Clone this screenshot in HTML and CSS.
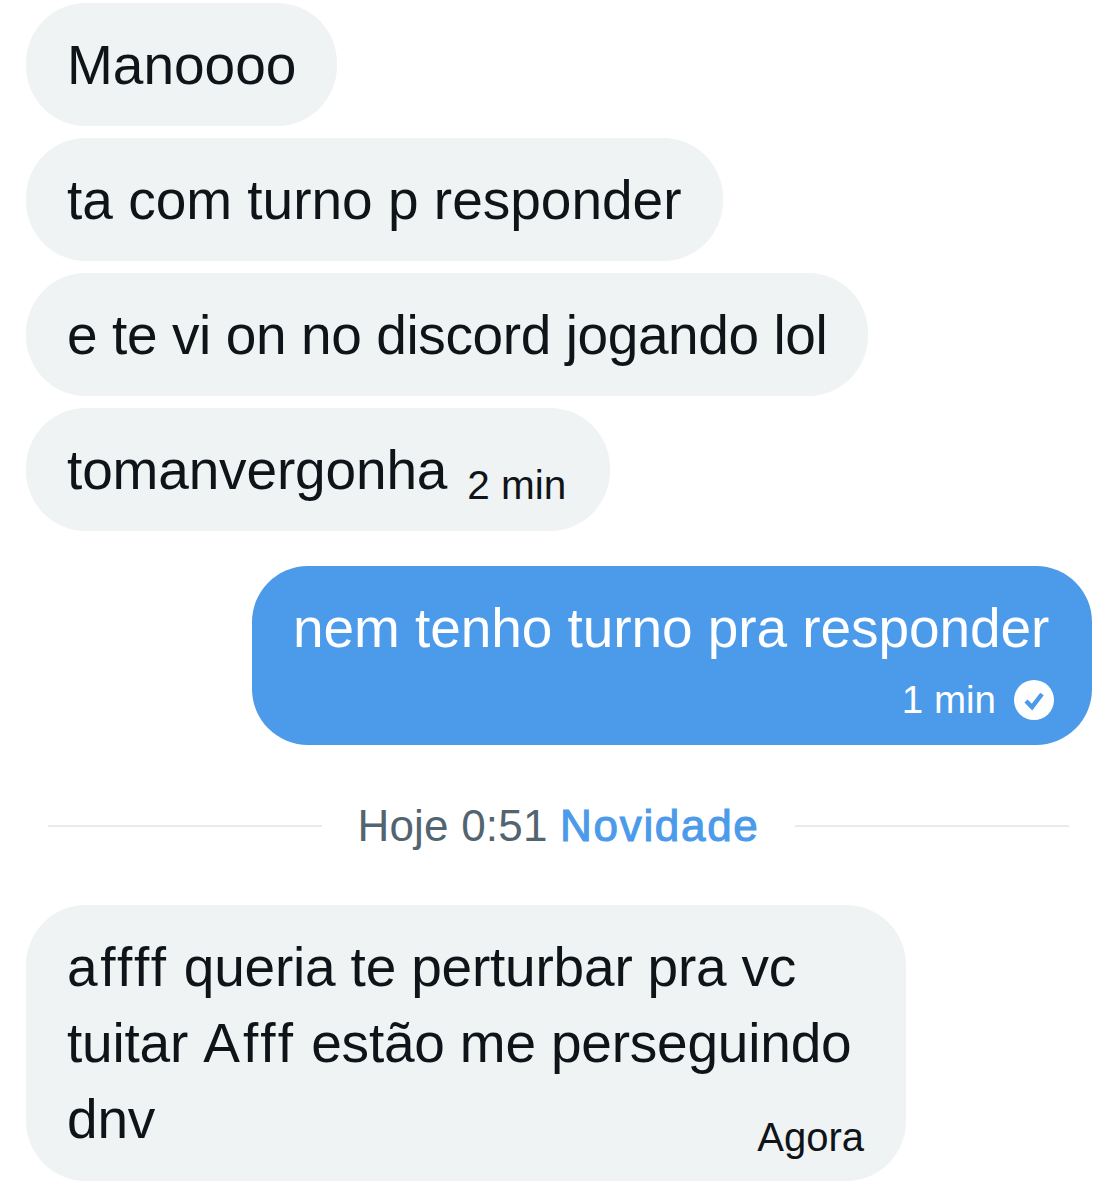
FILE: index.html
```html
<!DOCTYPE html>
<html lang="en">
<head>
  <meta charset="UTF-8" />
  <title>Messages</title>
  <link rel="stylesheet" href="styles.css">
</head>
<body>

<div class="chat">
  <div class="bubble">Manoooo</div>
  <div class="bubble">ta com turno p responder</div>
  <div class="bubble tight">e te vi on no discord jogando lol</div>
  <div class="bubble long">tomanvergonha<span class="time">2 min</span></div>

  <div class="bubble mine">
    <div>nem tenho turno pra responder</div>
    <div class="meta">
      <span>1 min</span>
      <svg width="40" height="40" viewBox="0 0 40 40">
        <circle cx="20" cy="20" r="20" fill="#fff" />
        <path d="M12 21l6 6 10-13" fill="none" stroke="#4c9aea" stroke-width="4.5" />
      </svg>
    </div>
  </div>

  <div class="divider">
    <span class="line"></span>
    <span class="label">Hoje 0:51 <b>Novidade</b></span>
    <span class="line"></span>
  </div>

  <div class="bubble last">
    <div><span class="wide-a">affff</span> queria te perturbar pra vc<br>tuitar <span class="wide-b">Afff</span> estão me perseguindo<br>dnv</div>
    <div class="now">Agora</div>
  </div>
</div>

</body>
</html>
```

FILE: styles.css
```css
body {
  margin: 0;
  background-color: #ffffff;
  font-family: "Liberation Sans", sans-serif;
  font-variant-ligatures: none;
  color: #0f1419;
}

.chat {
  display: flex;
  flex-direction: column;
  align-items: flex-start;
  padding: 3px 26px 0 26px;
}

/* Bubbles */
.bubble {
  background-color: #eff3f4;
  border-radius: 60px;
  padding: 0 41px;
  height: 123px;
  line-height: 125px;
  font-size: 55px;
  margin-bottom: 12px;
  box-sizing: border-box;
  white-space: nowrap;
}

.tight {
  letter-spacing: -0.4px;
}

.long {
  letter-spacing: -0.15px;
}

.time {
  font-size: 40.5px;
  letter-spacing: 0;
  margin: 0 3px 0 20px;
  position: relative;
  top: 10px;
}

.mine {
  align-self: flex-end;
  background-color: #4c9aea;
  color: #ffffff;
  width: 840px;
  height: 179px;
  line-height: 76px;
  letter-spacing: -0.07px;
  margin-top: 23px;
  margin-bottom: 0;
  padding: 24px 38px 0 41px;
  border-radius: 56px;
}

.meta {
  display: flex;
  justify-content: flex-end;
  align-items: center;
  gap: 18px;
  font-size: 38.5px;
  line-height: 40px;
  letter-spacing: 0;
  margin-top: 14px;
}

/* Divider */
.divider {
  display: flex;
  align-items: center;
  width: 1021px;
  margin: 56px 0 56px 22px;
  gap: 35px;
}

.line {
  flex: 1;
  height: 2px;
  background-color: #e7ebed;
}

.label {
  font-size: 44px;
  line-height: 50px;
  letter-spacing: 0.2px;
  color: #536471;
}

.label b {
  font-weight: normal;
  letter-spacing: 1.7px;
  -webkit-text-stroke: 1.1px #4c9aea;
  color: #4c9aea;
}

.last {
  width: 880px;
  height: 276px;
  line-height: 76px;
  letter-spacing: -0.2px;
  padding: 24px 42px 0 41px;
  margin: -2px 0 0;
}

.wide-a {
  letter-spacing: 2.6px;
}

.wide-b {
  letter-spacing: 3.1px;
}

.now {
  font-size: 40px;
  line-height: 42px;
  letter-spacing: 0;
  text-align: right;
  margin-top: -41px;
}
```
